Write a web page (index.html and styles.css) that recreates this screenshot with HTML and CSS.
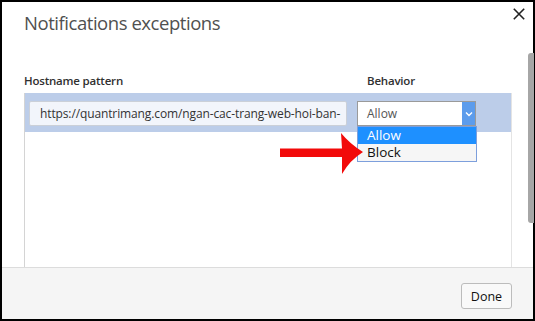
FILE: index.html
```html
<!DOCTYPE html>
<html>
<head>
<meta charset="utf-8">
<link rel="stylesheet" href="styles.css">
</head>
<body>
<div class="dialog">
  <div class="content">
    <div class="header">
      <h1 class="title">Notifications exceptions</h1>
      <span class="close">
        <svg width="12" height="12" viewBox="0 0 12 12"><path d="M0.8 0.8 L11.2 11.2 M11.2 0.8 L0.8 11.2" stroke="#222" stroke-width="1.6" fill="none"/></svg>
      </span>
    </div>
    <div class="table">
      <div class="thead">
        <div class="th host">Hostname pattern</div>
        <div class="th beh">Behavior</div>
      </div>
      <div class="tbody">
        <div class="row selected">
          <div class="input"><span class="input-text">https://quantrimang.com/ngan-cac-trang-web-hoi-ban-</span></div>
          <div class="select">
            <span class="sel-text">Allow</span>
            <span class="sel-btn">
              <svg width="8" height="6" viewBox="0 0 8 6"><path d="M1 1.5 L4 4.5 L7 1.5" stroke="#fff" stroke-width="1.4" fill="none"/></svg>
            </span>
            <div class="dropdown">
              <div class="opt active">Allow</div>
              <div class="opt">Block</div>
            </div>
          </div>
        </div>
      </div>
    </div>
  </div>
  <div class="footer">
    <button class="done">Done</button>
  </div>
  <div class="scrollbar"></div>
  <svg class="arrow" width="535" height="321" viewBox="0 0 535 321">
    <path d="M280 148.5 L342 148.5 L341 133 Q350 144 363 152 Q350 160 342 174 L342 157 L280 157 Z" fill="#f20a0a"/>
  </svg>
</div>
</body>
</html>
```
FILE: styles.css
```css
html, body {
  margin: 0;
  padding: 0;
}
body {
  width: 535px;
  height: 321px;
  overflow: hidden;
  font-family: "Open Sans", "Noto Sans", sans-serif;
}
.dialog {
  position: relative;
  box-sizing: border-box;
  width: 535px;
  height: 321px;
  border: 2px solid #000;
  background: #fff;
  display: flex;
  flex-direction: column;
}
.content {
  flex: 1;
  overflow: hidden;
  padding-left: 22px;
}
.header {
  display: flex;
  justify-content: space-between;
  align-items: flex-start;
}
.title {
  margin: 0;
  padding-top: 9px;
  font-size: 18.5px;
  line-height: 24px;
  font-weight: 400;
  color: #505050;
  letter-spacing: -0.45px;
}
.close {
  display: block;
  margin-top: 6px;
  margin-right: 8px;
  width: 12px;
  height: 12px;
}
.close svg { display: block; }
.table {
  margin-top: 38px;
  width: 488px;
}
.thead {
  display: grid;
  grid-template-columns: 333px 1fr;
  font-size: 11.5px;
  line-height: 16px;
  font-weight: 600;
  color: #303030;
  letter-spacing: -0.2px;
  margin-bottom: 4px;
}
.th.beh {
  padding-left: 10px;
}
.tbody {
  border-left: 1px solid #d4d4d4;
  border-right: 1px solid #e4e4e4;
  height: 200px;
}
.row {
  display: flex;
  gap: 10px;
  padding: 8px 0 6px 4px;
}
.row.selected {
  background: #bccde9;
}
.input {
  box-sizing: border-box;
  width: 318px;
  height: 25px;
  border: 1px solid #cbd0d8;
  border-radius: 2px;
  background: #f2f5fb;
  padding-left: 10px;
  font-size: 12px;
  line-height: 23px;
  color: #333;
  white-space: nowrap;
  overflow: hidden;
}
.input-text {
  letter-spacing: -0.12px;
}
.select {
  position: relative;
  box-sizing: border-box;
  width: 119px;
  height: 25px;
  border: 1px solid #9a9a9a;
  background: #fff;
  display: flex;
  justify-content: space-between;
}
.sel-text {
  padding-left: 9px;
  font-size: 12px;
  line-height: 23px;
  color: #555;
}
.sel-btn {
  width: 13px;
  height: 23px;
  background: #5c9cec;
  display: flex;
  align-items: center;
  justify-content: center;
}
.sel-btn svg { display: block; }
.dropdown {
  position: absolute;
  left: -1px;
  top: 24px;
  box-sizing: border-box;
  width: 120px;
  border: 1px solid #7d9fdc;
  background: #f6f6f6;
  z-index: 2;
}
.opt {
  height: 17px;
  line-height: 17px;
  padding-left: 9px;
  font-size: 13.5px;
  color: #111;
}
.opt.active {
  background: #1e90ff;
  color: #fff;
}
.footer {
  box-sizing: border-box;
  height: 52px;
  border-top: 1px solid #dcdcdc;
  background: #f5f5f5;
  display: flex;
  justify-content: flex-end;
  align-items: flex-start;
  padding: 15px 21px 0 0;
}
.done {
  box-sizing: border-box;
  width: 51px;
  height: 26px;
  border: 1px solid #bcbcbc;
  border-radius: 3px;
  background: #f9f9f9;
  font-family: "Open Sans", "Noto Sans", sans-serif;
  font-size: 12.5px;
  color: #111;
  padding: 0;
}
.scrollbar {
  position: absolute;
  left: 526px;
  top: 51px;
  width: 6px;
  height: 170px;
  background: #a6a6a6;
  border-radius: 3px 0 0 3px;
}
.arrow {
  position: absolute;
  left: -2px;
  top: -2px;
  z-index: 3;
  pointer-events: none;
}
```
